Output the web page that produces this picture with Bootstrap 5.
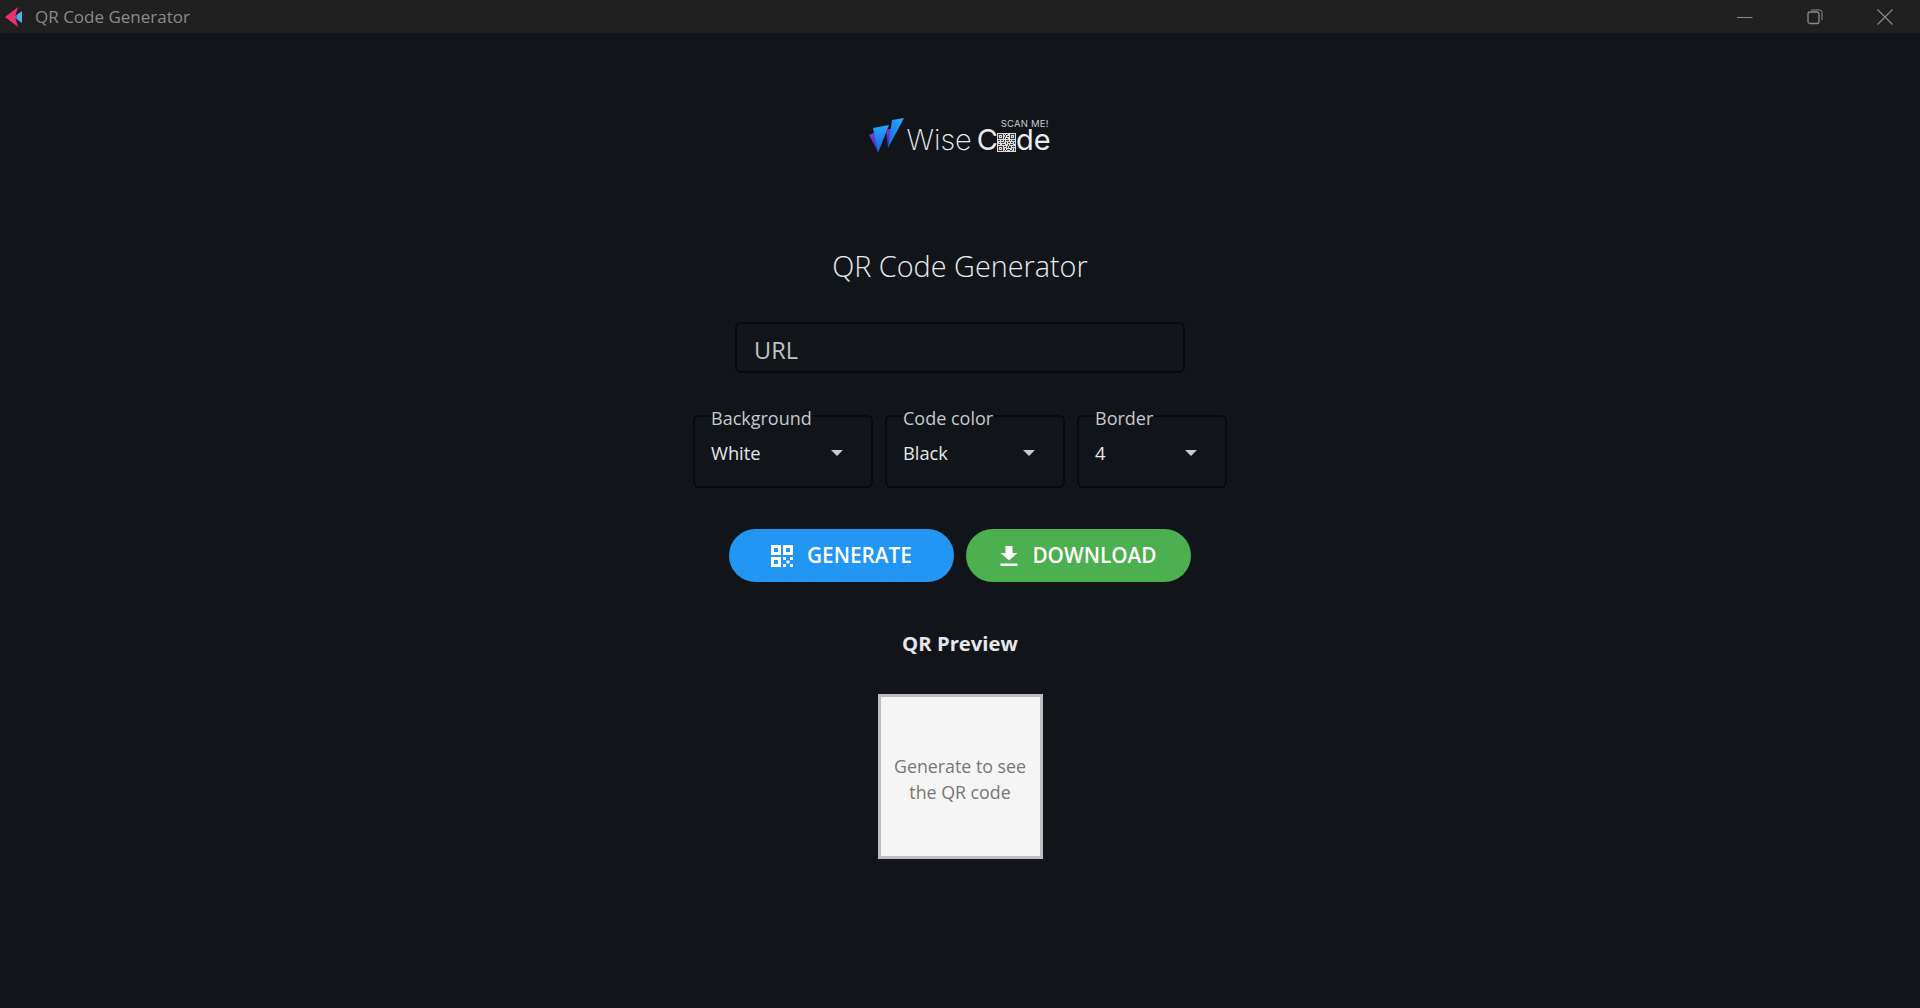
<!DOCTYPE html>
<html lang="en">
<head>
<meta charset="utf-8">
<title>QR Code Generator</title>
<link href="https://cdn.jsdelivr.net/npm/bootstrap@5.3.0/dist/css/bootstrap.min.css" rel="stylesheet">
<script src="https://cdn.jsdelivr.net/npm/bootstrap@5.3.0/dist/js/bootstrap.bundle.min.js"></script>
<style>
html,body{height:100%;}
body{background:#11151a;font-family:"Open Sans","Noto Sans",sans-serif;color:#e5e7eb;overflow:hidden;}
.titlebar{height:33px;background:#202020;color:#8a8a8a;font-size:17px;padding-top:1px;}
.app-ico{margin-left:5px;margin-right:11px;}
.winctl{width:70px;}
.main-col{padding-top:85px;}
.logo-wrap{height:35px;color:#e9ebee;}
.logo-word{font-family:Inter,"Noto Sans",sans-serif;font-size:29px;font-weight:200;line-height:24px;margin:10px 0 0 2px;position:relative;white-space:nowrap;}
.logo-c{font-weight:400;margin-left:5px;}
.logo-de{font-weight:400;}
.logo-scan{position:absolute;top:-8px;right:2px;font-size:9.5px;line-height:8px;font-weight:400;letter-spacing:.2px;color:#c9ccd0;}
.logo-qr{margin:5px 0 0 -1px;flex:none;}
.page-title{font-size:28.8px;font-weight:300;margin:94px 0 0;line-height:38px;color:#e8eaed;}
.url-input{width:450px;height:51px;margin-top:37px;background:transparent;border:2px solid #08090b;border-radius:6px;color:#c9cbce;font-size:23.5px;padding:4px 17px 0;}
.url-input::placeholder{color:#c0c2c5;opacity:1;}
.url-input:focus{background:transparent;color:#c9cbce;border-color:#08090b;box-shadow:none;}
.pick-row{margin-top:30px;gap:12px;}
.pick{border:2px solid #08090b;border-radius:6px;height:85px;margin:0;padding:0 16px;}
.pick legend{float:none;width:auto;margin:0 0 0 -1px;padding:4px 1px 0;font-size:18px;line-height:22px;color:#c6c8cb;}
.pick-w1{width:180px;}
.pick-w2{width:150px;}
.pick-toggle{padding:0;margin-top:12px;border:0;color:#e6e7e9;font-size:18.300px;width:100%;line-height:24px;}
.pick-toggle::after{margin:0 12px 0 0;border-top:6px solid #c8cacd;border-left:6px solid transparent;border-right:6px solid transparent;border-bottom:0;}
.pick-toggle:hover,.pick-toggle:active{color:#e6e7e9;}
.btn-row{margin-top:41px;gap:12px;}
.act{width:225px;height:53px;border-radius:27px;border:0;color:#fff;font-size:20.800px;font-weight:600;gap:14px;padding:0;}
.act-blue{background:#2196f3;}
.act-green{background:#4caf50;}
.act:hover{color:#fff;}
.act-blue:hover{background:#2196f3;}
.act-green:hover{background:#4caf50;}
.preview-title{font-size:20.300px;font-weight:700;margin:48px 0 0;line-height:27px;color:#e5e7eb;}
.preview-box{width:165px;height:165px;margin-top:37px;background:#f5f5f5;border:3px solid #bdbdbd;color:#777;font-size:17.800px;line-height:26px;font-weight:400;padding:4px 8px 0;}
</style>
</head>
<body>
<header class="titlebar d-flex align-items-center justify-content-between">
  <div class="d-flex align-items-center">
    <svg class="app-ico" width="19" height="20" viewBox="0 0 19 20"><path d="M13 0 L0 10 L13 20 L10 10Z" fill="#ef2f6c"/><path d="M17 4 L9 10 L17 16Z" fill="#4fb1e8"/><path d="M13 7 L9 10 L13 13 L11.900 10Z" fill="#7a5aa8"/></svg>
    <span>QR Code Generator</span>
  </div>
  <div class="d-flex align-items-center">
    <div class="winctl d-flex justify-content-center"><svg width="16" height="16" viewBox="0 0 16 16"><path d="M0 8.500H15.500" stroke="#8a8a8a" stroke-width="1"/></svg></div>
    <div class="winctl d-flex justify-content-center"><svg width="16" height="16" viewBox="0 0 16 16"><rect x="1" y="3" width="11" height="11.500" rx="2" fill="none" stroke="#8a8a8a" stroke-width="1.300"/><path d="M4 1H12.500A2.500 2.500 0 0 1 15 3.500V11" fill="none" stroke="#8a8a8a" stroke-width="1"/></svg></div>
    <div class="winctl d-flex justify-content-center"><svg width="16" height="16" viewBox="0 0 16 16"><path d="M.5.5L15.500 15.500M15.500.5L.5 15.500" stroke="#8a8a8a" stroke-width="1.200"/></svg></div>
  </div>
</header>

<main class="main-col d-flex flex-column align-items-center">
  <div class="logo-wrap d-flex align-items-start">
    <svg width="35" height="35" viewBox="0 0 35 35">
      <defs>
        <linearGradient id="gA" x1="0" y1="0" x2="0" y2="1"><stop offset="0" stop-color="#7b3fd0"/><stop offset="1" stop-color="#3b2aa8"/></linearGradient>
        <linearGradient id="gB" x1="0" y1="0" x2="0" y2="1"><stop offset="0" stop-color="#22a8ff"/><stop offset="1" stop-color="#1a5fe0"/></linearGradient>
        <linearGradient id="gC" x1="1" y1="0" x2="0" y2="1"><stop offset="0" stop-color="#25b0ff"/><stop offset="1" stop-color="#1468e8"/></linearGradient>
      </defs>
      <path d="M0 17 L7 14 L9 34Z" fill="url(#gA)"/>
      <path d="M4 10 L20 7 L9 35 Z" fill="url(#gB)"/>
      <path d="M17 12 L24 10 L19 30 Z" fill="url(#gA)"/>
      <path d="M23 2 L35 0 L19 30 Z" fill="url(#gC)"/>
    </svg>
    <div class="logo-word d-flex align-items-start"><span>Wise</span><span class="logo-c">C</span><svg class="logo-qr" width="19" height="19" viewBox="0 0 19 19"><rect width="19" height="19" fill="#dcdcdc"/><path fill="#3a3a3a" d="M1 1h5v5H1zM13 1h5v5h-5zM1 13h5v5H1z"/><path fill="#dcdcdc" d="M2 2h3v3H2zM14 2h3v3h-3zM2 14h3v3H2z"/><path fill="#3a3a3a" d="M3 3h1v1H3zM15 3h1v1h-1zM3 15h1v1H3zM7 1h1v1H7zM9 1h2v1H9zM8 2h1v2H8zM10 3h2v1h-2zM7 4h1v2H7zM9 5h2v1H9zM1 7h2v1H1zM4 7h2v1H4zM7 7h1v2H7zM9 7h3v1H9zM13 7h1v1h-1zM15 7h3v1h-3zM2 9h1v1H2zM4 9h3v1H4zM9 9h1v2H9zM11 9h2v1h-2zM14 9h2v1h-2zM17 9h1v2h-1zM1 11h2v1H1zM5 11h3v1H5zM11 11h1v2h-1zM13 11h3v1h-3zM7 13h2v1H7zM10 13h1v2h-1zM12 13h2v2h-2zM15 13h3v1h-3zM8 15h1v2H8zM15 15h1v2h-1zM17 15h1v3h-1zM10 16h3v1h-3zM7 17h1v1H7zM9 17h1v1H9zM13 17h2v1h-2z"/></svg><span class="logo-de">de</span><span class="logo-scan">SCAN ME!</span></div>
  </div>

  <h1 class="page-title">QR Code Generator</h1>

  <input class="form-control url-input" type="text" placeholder="URL">

  <div class="pick-row d-flex">
    <fieldset class="pick pick-w1">
      <legend>Background</legend>
      <button class="btn dropdown-toggle pick-toggle d-flex align-items-center justify-content-between" type="button">White</button>
    </fieldset>
    <fieldset class="pick pick-w1">
      <legend>Code color</legend>
      <button class="btn dropdown-toggle pick-toggle d-flex align-items-center justify-content-between" type="button">Black</button>
    </fieldset>
    <fieldset class="pick pick-w2">
      <legend>Border</legend>
      <button class="btn dropdown-toggle pick-toggle d-flex align-items-center justify-content-between" type="button">4</button>
    </fieldset>
  </div>

  <div class="btn-row d-flex">
    <button class="btn act act-blue d-flex align-items-center justify-content-center" type="button">
      <svg width="22" height="22" viewBox="0 0 22 22" fill="#fff"><path fill-rule="evenodd" d="M0 0H10V10H0ZM3 3V7H7V3ZM12 0H22V10H12ZM15 3V7H19V3ZM0 12H10V22H0ZM3 15V19H7V15Z"/><path d="M12 12H15V15H12ZM19 12H22V15H19ZM15.500 15.500H18.500V18.500H15.500ZM12 19H15V22H12ZM19 19H22V22H19Z"/></svg>
      <span>GENERATE</span>
    </button>
    <button class="btn act act-green d-flex align-items-center justify-content-center" type="button">
      <svg width="18" height="22" viewBox="0 0 18 22" fill="#fff"><path d="M5.500 1H12.500V8H17.500L9 15.500L.5 8H5.500Z"/><rect x="0.500" y="18.500" width="17" height="2.500"/></svg>
      <span>DOWNLOAD</span>
    </button>
  </div>

  <h2 class="preview-title">QR Preview</h2>

  <div class="preview-box d-flex align-items-center justify-content-center text-center">Generate to see the QR code</div>
</main>
</body>
</html>
